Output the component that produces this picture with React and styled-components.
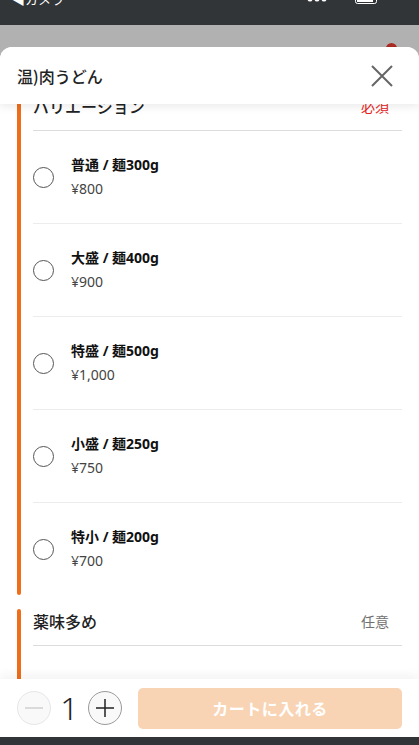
import React from 'react';
import styled, { createGlobalStyle } from 'styled-components';

const GlobalStyle = createGlobalStyle`
  html, body {
    margin: 0;
    padding: 0;
    height: 100%;
    background: #323538;
  }
  body {
    font-family: "Noto Sans", "Noto Sans CJK JP", sans-serif;
    color: #222;
  }
  #root {
    height: 100%;
  }
`;

const Screen = styled.div`
  height: 100vh;
  display: flex;
  flex-direction: column;
  overflow: hidden;
`;

const StatusBar = styled.div`
  height: 25px;
  flex-shrink: 0;
  background: #323538;
  display: flex;
  justify-content: space-between;
  padding: 0 40px 0 12px;
  overflow: hidden;
  color: #fff;
`;

const BackLabel = styled.div`
  font-size: 13px;
  line-height: 16px;
  margin-top: -9px;
  font-family: "Noto Sans CJK JP", sans-serif;
`;

const StatusIcons = styled.div`
  display: flex;
  gap: 26px;
  margin-top: -7px;
`;

const Backdrop = styled.div`
  flex: 1;
  min-height: 0;
  background: #b1b1b1;
  padding-top: 22px;
  display: flex;
  flex-direction: column;
  position: relative;
`;

const Badge = styled.span`
  position: absolute;
  top: 18px;
  right: 22px;
  width: 11px;
  height: 11px;
  border-radius: 50%;
  background: #a82a22;
`;

const Sheet = styled.div`
  flex: 1;
  min-height: 0;
  background: #fff;
  border-radius: 12px 12px 0 0;
  display: flex;
  flex-direction: column;
  overflow: hidden;
  position: relative;
  z-index: 1;
`;

const SheetHeader = styled.div`
  height: 57px;
  flex-shrink: 0;
  display: flex;
  align-items: center;
  justify-content: space-between;
  padding: 0 25px 0 17px;
  box-shadow: 0 3px 8px rgba(0, 0, 0, 0.08);
  position: relative;
  z-index: 2;
  background: #fff;
`;

const Title = styled.h1`
  margin: 0;
  font-size: 16px;
  font-weight: 500;
  color: #222;
  font-family: "Noto Sans CJK JP", sans-serif;
`;

const CloseButton = styled.button`
  border: 0;
  background: none;
  padding: 0;
  width: 24px;
  height: 24px;
  display: flex;
  cursor: pointer;
`;

const Body = styled.div`
  flex: 1;
  min-height: 0;
  overflow: hidden;
  padding: 0 17px;
`;

const Scroller = styled.div`
  margin-top: -10px;
  display: flex;
  flex-direction: column;
  gap: 14px;
`;

const Section = styled.section`
  display: flex;
  gap: 12px;
`;

const AccentBar = styled.div`
  width: 4px;
  flex-shrink: 0;
  border-radius: 2px;
  background: #f06d1a;
`;

const SectionContent = styled.div`
  flex: 1;
  min-width: 0;
`;

const SectionHead = styled.div`
  display: flex;
  justify-content: space-between;
  align-items: center;
  padding: 0 13px 12px 0;
  border-bottom: 1px solid #dcdcdc;
  line-height: 24px;
  font-family: "Noto Sans CJK JP", sans-serif;
`;

const SectionTitle = styled.span`
  font-size: 16px;
  font-weight: 500;
  color: #222;
`;

const Requirement = styled.span`
  font-size: 14px;
  color: ${(p) => (p.$required ? '#e8231b' : '#707070')};
`;

const OptionRow = styled.label`
  height: 92px;
  display: flex;
  align-items: center;
  gap: 17px;
  border-bottom: 1px solid #ececec;

  &:last-child {
    border-bottom: 0;
  }
`;

const Radio = styled.span`
  width: 19px;
  height: 19px;
  border-radius: 50%;
  border: 1px solid #555;
  flex-shrink: 0;
  background: #fff;
`;

const OptionText = styled.div`
  display: flex;
  flex-direction: column;
  gap: 4px;
`;

const OptionName = styled.span`
  font-size: 14px;
  font-weight: 700;
  line-height: 20px;
  color: #111;
`;

const OptionPrice = styled.span`
  font-size: 14px;
  line-height: 20px;
  color: #444;
`;

const EmptyArea = styled.div`
  height: 40px;
`;

const Footer = styled.div`
  height: 58px;
  flex-shrink: 0;
  display: flex;
  align-items: center;
  padding: 0 17px;
  background: #fff;
  box-shadow: 0 -4px 10px rgba(0, 0, 0, 0.05);
  position: relative;
  z-index: 2;
`;

const Stepper = styled.div`
  display: flex;
  align-items: center;
  width: 121px;
  flex-shrink: 0;
`;

const StepButton = styled.button`
  width: 34px;
  height: 34px;
  border-radius: 50%;
  border: 1px solid ${(p) => (p.disabled ? '#e6e6e6' : '#9a9a9a')};
  background: #f9f9f9;
  padding: 0;
  display: flex;
  align-items: center;
  justify-content: center;
  color: ${(p) => (p.disabled ? '#cfcfcf' : '#222')};
`;

const Quantity = styled.span`
  width: 37px;
  text-align: center;
  font-size: 32px;
  font-weight: 300;
  color: #222;
  font-family: "Noto Sans", sans-serif;
  line-height: 34px;
`;

const CartButton = styled.button`
  flex: 1;
  height: 41px;
  border: 0;
  border-radius: 5px;
  background: #f8d4b4;
  color: #fff;
  font-size: 16px;
  font-weight: 700;
  font-family: "Noto Sans CJK JP", sans-serif;
  letter-spacing: 0.5px;
`;

const HomeBar = styled.div`
  height: 8px;
  flex-shrink: 0;
  background: #323538;
`;

const variations = [
  { name: '普通 / 麺300g', price: '¥800' },
  { name: '大盛 / 麺400g', price: '¥900' },
  { name: '特盛 / 麺500g', price: '¥1,000' },
  { name: '小盛 / 麺250g', price: '¥750' },
  { name: '特小 / 麺200g', price: '¥700' },
];

const App = () => {
  return (
    <Screen>
      <GlobalStyle />
      <StatusBar>
        <BackLabel>◀カメラ</BackLabel>
        <StatusIcons>
          <svg width="22" height="10" viewBox="0 0 22 10">
            <circle cx="3" cy="6" r="2.5" fill="#fff" />
            <circle cx="10" cy="6" r="2.5" fill="#fff" />
            <circle cx="17" cy="6" r="2.5" fill="#fff" />
          </svg>
          <svg width="24" height="12" viewBox="0 0 24 12">
            <rect x="0.5" y="0.5" width="21" height="10" rx="2" fill="none" stroke="#fff" />
            <rect x="2" y="2" width="16" height="7" fill="#fff" />
          </svg>
        </StatusIcons>
      </StatusBar>
      <Backdrop>
        <Badge />
        <Sheet>
          <SheetHeader>
            <Title>温)肉うどん</Title>
            <CloseButton aria-label="閉じる">
              <svg width="24" height="24" viewBox="0 0 24 24">
                <path d="M2 2 L22 22 M22 2 L2 22" stroke="#666" strokeWidth="2" fill="none" />
              </svg>
            </CloseButton>
          </SheetHeader>
          <Body>
            <Scroller>
              <Section>
                <AccentBar />
                <SectionContent>
                  <SectionHead>
                    <SectionTitle>バリエーション</SectionTitle>
                    <Requirement $required>必須</Requirement>
                  </SectionHead>
                  {variations.map((v) => (
                    <OptionRow key={v.name}>
                      <Radio />
                      <OptionText>
                        <OptionName>{v.name}</OptionName>
                        <OptionPrice>{v.price}</OptionPrice>
                      </OptionText>
                    </OptionRow>
                  ))}
                </SectionContent>
              </Section>
              <Section>
                <AccentBar />
                <SectionContent>
                  <SectionHead>
                    <SectionTitle>薬味多め</SectionTitle>
                    <Requirement>任意</Requirement>
                  </SectionHead>
                  <EmptyArea />
                </SectionContent>
              </Section>
            </Scroller>
          </Body>
          <Footer>
            <Stepper>
              <StepButton disabled aria-label="減らす">
                <svg width="20" height="20" viewBox="0 0 20 20">
                  <path d="M1 10 H19" stroke="currentColor" strokeWidth="1.5" />
                </svg>
              </StepButton>
              <Quantity>1</Quantity>
              <StepButton aria-label="増やす">
                <svg width="20" height="20" viewBox="0 0 20 20">
                  <path d="M1 10 H19 M10 1 V19" stroke="currentColor" strokeWidth="1.5" />
                </svg>
              </StepButton>
            </Stepper>
            <CartButton>カートに入れる</CartButton>
          </Footer>
        </Sheet>
      </Backdrop>
      <HomeBar />
    </Screen>
  );
};

export default App;
